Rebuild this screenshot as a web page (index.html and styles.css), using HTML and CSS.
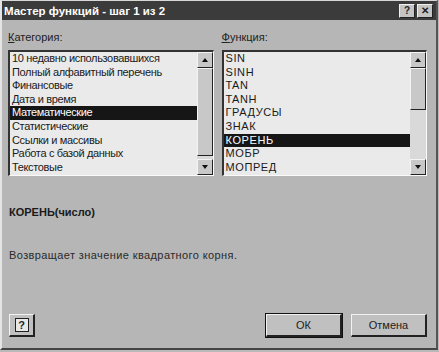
FILE: index.html
```html
<!DOCTYPE html>
<html lang="ru">
<head>
<meta charset="utf-8">
<link rel="stylesheet" href="styles.css">
</head>
<body>
<div class="dialog">
  <div class="titlebar">
    <span class="title">Мастер функций - шаг 1 из 2</span>
    <div class="tbuttons">
      <span class="tbtn">?</span>
      <span class="tbtn close">✕</span>
    </div>
  </div>
  <div class="content">
    <div class="columns">
      <div class="col">
        <div class="label"><u>К</u>атегория:</div>
        <div class="listbox">
          <ul class="items narrow">
            <li>10 недавно использовавшихся</li>
            <li>Полный алфавитный перечень</li>
            <li>Финансовые</li>
            <li>Дата и время</li>
            <li class="sel">Математические</li>
            <li>Статистические</li>
            <li>Ссылки и массивы</li>
            <li>Работа с базой данных</li>
            <li>Текстовые</li>
          </ul>
          <div class="scrollbar">
            <div class="arrow up"><span></span></div>
            <div class="track"><div class="thumb big"></div></div>
            <div class="arrow down"><span></span></div>
          </div>
        </div>
      </div>
      <div class="col">
        <div class="label"><u>Ф</u>ункция:</div>
        <div class="listbox">
          <ul class="items wide">
            <li>SIN</li>
            <li>SINH</li>
            <li>TAN</li>
            <li>TANH</li>
            <li>ГРАДУСЫ</li>
            <li>ЗНАК</li>
            <li class="sel">КОРЕНЬ</li>
            <li>МОБР</li>
            <li>МОПРЕД</li>
          </ul>
          <div class="scrollbar">
            <div class="arrow up"><span></span></div>
            <div class="track"><div class="thumb small"></div></div>
            <div class="arrow down"><span></span></div>
          </div>
        </div>
      </div>
    </div>
    <div class="syntax">КОРЕНЬ(число)</div>
    <div class="desc">Возвращает значение квадратного корня.</div>
    <div class="footer">
      <button class="btn help"><span class="qicon">?</span></button>
      <div class="right">
        <button class="btn default">ОК</button>
        <button class="btn">Отмена</button>
      </div>
    </div>
  </div>
</div>
</body>
</html>
```

FILE: styles.css
```css
html, body {
  margin: 0;
  padding: 0;
  background: #b9b9b9;
}
body {
  width: 439px;
  height: 352px;
  overflow: hidden;
  font-family: "Liberation Sans", Arial, sans-serif;
  font-size: 11px;
  color: #111;
}
.dialog {
  box-sizing: border-box;
  width: 438px;
  height: 350px;
  background: #b6b6b6;
  border-left: 2px solid #e4e4e4;
  border-top: 1px solid #d8d8d8;
  border-right: 2px solid #555;
  border-bottom: 2px solid #444;
  display: flex;
  flex-direction: column;
}
.titlebar {
  height: 19px;
  background: #3b3b3b;
  display: flex;
  align-items: center;
  justify-content: space-between;
  padding: 0 3px 0 2px;
}
.title {
  color: #fff;
  font-weight: bold;
  font-size: 11.5px;
}
.tbuttons {
  display: flex;
  gap: 2px;
}
.tbtn {
  box-sizing: border-box;
  width: 16px;
  height: 14px;
  background: #c4c4c4;
  border-top: 1px solid #f0f0f0;
  border-left: 1px solid #f0f0f0;
  border-right: 1px solid #222;
  border-bottom: 1px solid #222;
  font-size: 10px;
  font-weight: bold;
  display: flex;
  align-items: center;
  justify-content: center;
  color: #222;
  line-height: 1;
}
.content {
  flex: 1;
  padding: 11px 9px 0 6px;
  display: flex;
  flex-direction: column;
}
.columns {
  display: flex;
  gap: 8px;
}
.col {
  width: 206px;
}
.label {
  height: 13px;
  line-height: 13px;
  margin-bottom: 6px;
  color: #222;
}
.listbox {
  box-sizing: border-box;
  height: 126px;
  display: flex;
  background: #eaeaea;
  border-top: 2px solid #333;
  border-left: 2px solid #333;
  border-right: 1px solid #fafafa;
  border-bottom: 1px solid #fafafa;
}
.items {
  list-style: none;
  margin: 0;
  padding: 0;
  flex: 1;
  overflow: hidden;
}
.items li {
  height: 13.6px;
  line-height: 13.6px;
  padding-left: 2px;
  white-space: nowrap;
  color: #1a1a1a;
}
.items.narrow li {
  letter-spacing: -0.35px;
}
.items.wide li {
  letter-spacing: 0.6px;
}
.items li.sel {
  background: #161616;
  color: #fff;
}
.scrollbar {
  width: 16px;
  display: flex;
  flex-direction: column;
  background: #d9d9d9;
}
.arrow {
  box-sizing: border-box;
  height: 16px;
  background: #c8c8c8;
  border-top: 1px solid #f4f4f4;
  border-left: 1px solid #f4f4f4;
  border-right: 1px solid #222;
  border-bottom: 1px solid #222;
  display: flex;
  align-items: center;
  justify-content: center;
}
.arrow span {
  width: 0;
  height: 0;
  border-left: 3px solid transparent;
  border-right: 3px solid transparent;
}
.arrow.up span {
  border-bottom: 4px solid #111;
}
.arrow.down span {
  border-top: 4px solid #111;
}
.track {
  flex: 1;
  display: flex;
  flex-direction: column;
}
.thumb {
  box-sizing: border-box;
  background: #c8c8c8;
  border-top: 1px solid #f4f4f4;
  border-left: 1px solid #f4f4f4;
  border-right: 1px solid #222;
  border-bottom: 1px solid #222;
}
.thumb.big {
  height: 88px;
}
.thumb.small {
  height: 42px;
}
.syntax {
  margin-top: 29px;
  margin-left: 1px;
  font-weight: bold;
  height: 14px;
  line-height: 14px;
  color: #1a1a1a;
}
.desc {
  margin-top: 29px;
  margin-left: 1px;
  height: 14px;
  line-height: 14px;
  color: #2a2a2a;
  letter-spacing: 0.4px;
}
.footer {
  margin-top: 52px;
  display: flex;
  justify-content: space-between;
  align-items: center;
}
.right {
  display: flex;
  gap: 9px;
}
.btn {
  box-sizing: border-box;
  height: 23px;
  width: 76px;
  margin: 0;
  padding: 0;
  background: #c0c0c0;
  font-family: "Liberation Sans", Arial, sans-serif;
  font-size: 11px;
  color: #222;
  border-top: 1px solid #f2f2f2;
  border-left: 1px solid #f2f2f2;
  border-right: 2px solid #222;
  border-bottom: 2px solid #222;
}
.btn.default {
  outline: 1px solid #111;
}
.btn.help {
  width: 26px;
  margin-left: 1px;
  display: flex;
  align-items: center;
  justify-content: center;
}
.qicon {
  box-sizing: border-box;
  width: 14px;
  height: 14px;
  border: 1px solid #222;
  background: #e8e8e8;
  font-weight: bold;
  font-size: 11px;
  line-height: 12px;
  text-align: center;
}
```
